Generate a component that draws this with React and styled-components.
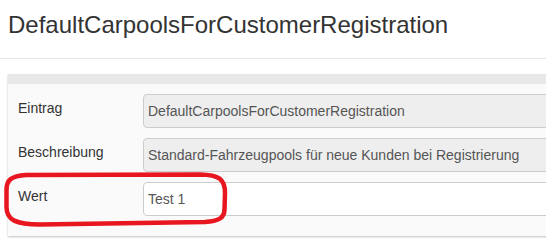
import React from "react";
import styled, { createGlobalStyle } from "styled-components";

const GlobalStyle = createGlobalStyle`
  html, body {
    margin: 0;
    padding: 0;
    background: #fff;
    overflow: hidden;
  }
  body {
    font-family: "Liberation Sans", Arial, sans-serif;
    font-size: 14px;
    color: #333;
  }
`;

const Page = styled.div`
  position: relative;
  width: 546px;
  height: 243px;
  overflow: hidden;
`;

const Header = styled.header`
  height: 47px;
  padding: 11px 0 0 8px;
  border-bottom: 1px solid #e6e6e6;
`;

const Title = styled.h1`
  margin: 0;
  font-size: 24px;
  line-height: 27px;
  font-weight: 400;
  color: #333;
  white-space: nowrap;
`;

const Panel = styled.section`
  margin: 15px 0 0 8px;
  width: 640px;
  background: #fafafa;
  box-shadow: 0 1px 2px rgba(0, 0, 0, 0.25);
`;

const PanelBar = styled.div`
  height: 10px;
  background: #e8e8e8;
`;

const PanelBody = styled.div`
  display: grid;
  gap: 10px;
  padding: 10px 10px 20px;
`;

const Row = styled.div`
  display: grid;
  grid-template-columns: 125px 1fr;
  align-items: start;
`;

const Label = styled.label`
  padding-top: 4px;
  line-height: 20px;
  color: #333;
`;

const Field = styled.div`
  box-sizing: border-box;
  height: 34px;
  padding: 6px 4px;
  line-height: 20px;
  color: #555;
  border: 1px solid #ccc;
  border-radius: 4px;
  background: ${(p) => (p.$disabled ? "#eeeeee" : "#fff")};
  white-space: nowrap;
`;

const Marker = styled.svg`
  position: absolute;
  left: 0;
  top: 0;
  pointer-events: none;
`;

const rows = [
  { label: "Eintrag", value: "DefaultCarpoolsForCustomerRegistration", disabled: true },
  { label: "Beschreibung", value: "Standard-Fahrzeugpools für neue Kunden bei Registrierung", disabled: true },
  { label: "Wert", value: "Test 1", disabled: false },
];

export default function App() {
  return (
    <Page>
      <GlobalStyle />
      <Header>
        <Title>DefaultCarpoolsForCustomerRegistration</Title>
      </Header>
      <Panel>
        <PanelBar />
        <PanelBody>
          {rows.map((r) => (
            <Row key={r.label}>
              <Label>{r.label}</Label>
              <Field $disabled={r.disabled}>{r.value}</Field>
            </Row>
          ))}
        </PanelBody>
      </Panel>
      <Marker width="546" height="243" viewBox="0 0 546 243">
        <path
          d="M 26 175 L 200 174.5 C 219 175, 225 179, 225 193 L 224.5 210 C 224 218, 219 221, 205 222 L 40 224.5 C 16 224.5, 6.5 220, 6.5 207 L 6.5 190 C 6.5 180, 11 176, 26 175 Z"
          fill="none"
          stroke="#e8161e"
          strokeWidth="4.5"
          strokeLinejoin="round"
        />
      </Marker>
    </Page>
  );
}
